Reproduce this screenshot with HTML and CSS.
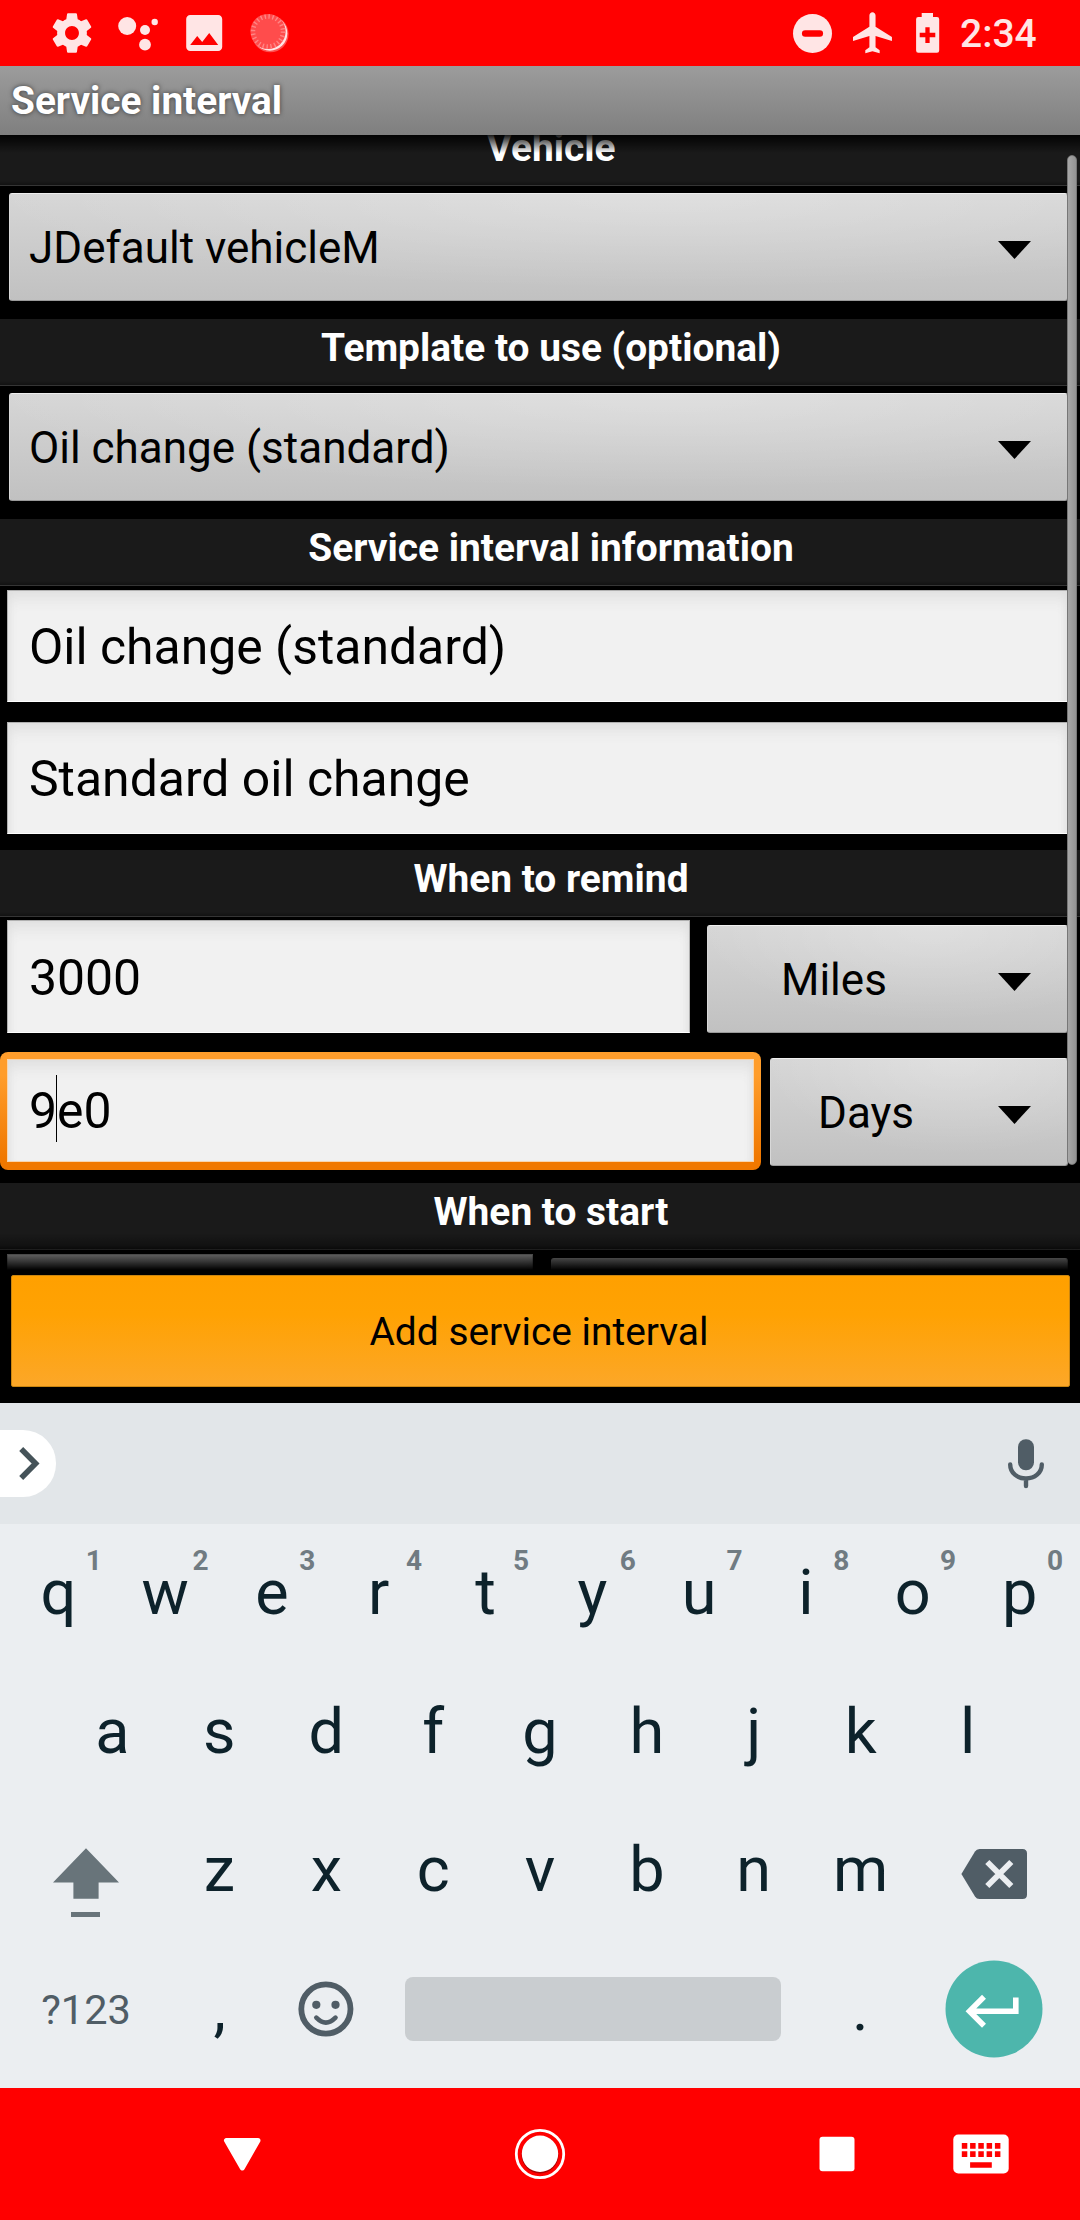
FILE: index.html
```html
<!DOCTYPE html>
<html lang="en">
<head>
<meta charset="utf-8">
<title>Service interval</title>
<link rel="stylesheet" href="styles.css">
</head>
<body>
<div class="screen">
  <header class="status">
    <svg class="status-left" width="300" height="66" viewBox="0 0 300 66" fill="#ffe5e5">
      <path transform="translate(48.2 9.2) scale(1.983)" d="M19.43 12.98c.04-.32.07-.64.07-.98s-.03-.66-.07-.98l2.11-1.65c.19-.15.24-.42.12-.64l-2-3.46c-.12-.22-.39-.3-.61-.22l-2.49 1c-.52-.4-1.08-.73-1.69-.98l-.38-2.65C14.46 2.18 14.25 2 14 2h-4c-.25 0-.46.18-.49.42l-.38 2.65c-.61.25-1.17.59-1.69.98l-2.49-1c-.23-.09-.49 0-.61.22l-2 3.46c-.13.22-.07.49.12.64l2.11 1.65c-.04.32-.07.65-.07.98s.03.66.07.98l-2.11 1.65c-.19.15-.24.42-.12.64l2 3.46c.12.22.39.3.61.22l2.49-1c.52.4 1.08.73 1.69.98l.38 2.65c.03.24.24.42.49.42h4c.25 0 .46-.18.49-.42l.38-2.65c.61-.25 1.17-.59 1.69-.98l2.49 1c.23.09.49 0 .61-.22l2-3.46c.12-.22.07-.49-.12-.64l-2.11-1.65zM12 15.5c-1.93 0-3.5-1.57-3.5-3.5s1.57-3.5 3.5-3.5 3.5 1.57 3.5 3.5-1.57 3.5-3.5 3.5z"/>
      <circle cx="127.2" cy="26" r="9"/><circle cx="145" cy="30" r="5"/><circle cx="154.7" cy="22" r="3.2"/><circle cx="145" cy="44.7" r="5.9"/>
      <path transform="translate(180.2 9) scale(2)" d="M21 19V5c0-1.1-.9-2-2-2H5c-1.1 0-2 .9-2 2v14c0 1.1.9 2 2 2h14c1.1 0 2-.9 2-2zM8.5 13.5l2.5 3.01L14.500 12l4.500 6H5l3.500-4.500z"/>
      <circle cx="270.300" cy="34" r="18.300" opacity=".35"/>
      <circle cx="269.800" cy="33.200" r="17.500"/>
      <circle cx="268" cy="31.500" r="17.600" fill="#ff4c4c"/>
      <circle cx="268" cy="31.500" r="15" fill="none" stroke="#ff8585" stroke-width="4.500" stroke-dasharray="1.400 2.527"/>
    </svg>
    <svg class="status-right" width="145" height="66" viewBox="790 0 145 66" fill="#ffe5e5">
      <circle cx="812.500" cy="33.400" r="19.500"/>
      <path d="M805.200 33.400h14.600" stroke="#f00" stroke-width="6.500" stroke-linecap="round"/>
      <path transform="translate(848.900 8.200) scale(2.050)" d="M21 16v-2l-8-5V3.500c0-.83-.67-1.500-1.500-1.500S10 2.670 10 3.500V9l-8 5v2l8-2.500V19l-2 1.500V22l3.500-1 3.500 1v-1.500L13 19v-5.500l8 2.500z"/>
    </svg>
    <svg width="26" height="66" viewBox="915 0 26 66" fill="#ffe5e5">
      <path d="M921.700 13h11.300v4h4a2.200 2.200 0 0 1 2.200 2.200v31.300a2.200 2.200 0 0 1-2.200 2.200h-18.700a2.200 2.200 0 0 1-2.200-2.200V19.200a2.200 2.200 0 0 1 2.200-2.200h3.400z"/>
      <path d="M919.700 35h15.600M927.500 27.300v15.600" stroke="#f00" stroke-width="4.300"/>
    </svg>
    <span class="clock">2:34</span>
  </header>

  <div class="titlebar">Service interval</div>

  <main class="form">
    <h2 class="section section-first">Vehicle</h2>
    <div class="row row-spinner"><div class="spinner"><span>JDefault vehicleM</span><i class="arrow"></i></div></div>
    <h2 class="section">Template to use (optional)</h2>
    <div class="row row-spinner"><div class="spinner"><span>Oil change (standard)</span><i class="arrow"></i></div></div>
    <h2 class="section">Service interval information</h2>
    <div class="row row-edit"><div class="edit">Oil change (standard)</div></div>
    <div class="row row-edit"><div class="edit">Standard oil change</div></div>
    <h2 class="section">When to remind</h2>
    <div class="row row-pair">
      <div class="edit edit-distance">3000</div>
      <div class="spinner spinner-miles"><span>Miles</span><i class="arrow"></i></div>
    </div>
    <div class="row row-focus">
      <div class="focus"><div class="edit edit-active">9<span class="caret"></span>e0</div></div>
      <div class="spinner spinner-days"><span>Days</span><i class="arrow"></i></div>
    </div>
    <h2 class="section">When to start</h2>
    <div class="row row-start"><div class="edit edit-start"></div><div class="spinner spinner-start"></div></div>
    <div class="fade-top"></div>
    <div class="fade-bottom"></div>
    <div class="scrollbar"></div>
  </main>

  <div class="actions"><button class="submit">Add service interval</button></div>

  <section class="keyboard">
    <div class="strip">
      <div class="expand"><svg width="56" height="67" viewBox="0 0 56 67"><path d="M21.200 19 35.600 33.500 21.200 48" fill="none" stroke="#455359" stroke-width="5.600"/></svg></div>
      <svg class="mic" width="36" height="52" viewBox="1008 1437 36 52"><rect x="1018" y="1438.300" width="16" height="31" rx="7.800" fill="#505d66"/><path d="M1010.200 1463.500c0 8.500 7.200 14 15.800 14s15.800-5.500 15.800-14M1026 1478v7" fill="none" stroke="#505d66" stroke-width="4.400" stroke-linecap="round"/></svg>
    </div>
    <div class="keys">
      <div class="keyrow keyrow-1">
        <div class="key">q<sup>1</sup></div><div class="key">w<sup>2</sup></div><div class="key">e<sup>3</sup></div><div class="key">r<sup>4</sup></div><div class="key">t<sup>5</sup></div><div class="key">y<sup>6</sup></div><div class="key">u<sup>7</sup></div><div class="key">i<sup>8</sup></div><div class="key">o<sup>9</sup></div><div class="key">p<sup>0</sup></div>
      </div>
      <div class="keyrow keyrow-2">
        <div class="key">a</div><div class="key">s</div><div class="key">d</div><div class="key">f</div><div class="key">g</div><div class="key">h</div><div class="key">j</div><div class="key">k</div><div class="key">l</div>
      </div>
      <div class="keyrow keyrow-3">
        <div class="key-wide"><svg width="68" height="138" viewBox="52 1801 68 138" fill="#68747a"><path d="M86 1848.300 119 1882.400H98.600v16.400H73.400v-16.400H53zM71 1912h29v5H71z"/></svg></div>
        <div class="key">z</div><div class="key">x</div><div class="key">c</div><div class="key">v</div><div class="key">b</div><div class="key">n</div><div class="key">m</div>
        <div class="key-wide"><svg width="68" height="138" viewBox="959 1801 68 138"><path d="M960.400 1874 974 1851.500q1.600-2.500 4.500-2.500h43q4.500 0 4.500 4.500v41q0 4.500-4.500 4.500h-43q-2.900 0-4.500-2.500z" fill="#505d66"/><path d="m986.300 1862 24 24m0-24-24 24" stroke="#ebeef1" stroke-width="5.800"/></svg></div>
      </div>
      <div class="keyrow keyrow-4">
        <div class="key-wide key-symbols">?123</div>
        <div class="key key-mark">,</div>
        <div class="key"><svg width="60" height="138" viewBox="295.500 1939.500 60 138" fill="none" stroke="#505d66"><circle cx="324.400" cy="2008.500" r="24.600" stroke-width="5.800"/><g fill="#505d66" stroke="none"><circle cx="314.800" cy="2004.300" r="4.100"/><circle cx="334" cy="2004.300" r="4.100"/></g><path d="M314.800 2017.200q9.600 9.800 19.200 0" stroke-width="4.600" stroke-linecap="round"/></svg></div>
        <div class="space"></div>
        <div class="key key-mark">.</div>
        <div class="key-wide"><svg width="100" height="138" viewBox="943.500 1939.500 100 138"><circle cx="993.500" cy="2008.500" r="48.500" fill="#4db6ac"/><path d="M983.500 1996.200 969 2010.700l14.500 14.500M969.500 2010.700h45.800V1997" fill="none" stroke="#fff" stroke-width="5.600"/></svg></div>
      </div>
    </div>
  </section>

  <nav class="navbar">
    <svg width="1080" height="132" viewBox="0 2088 1080 132" fill="#fff">
      <path d="M226.500 2140.500h31.500L242.300 2168z" stroke="#fff" stroke-width="5" stroke-linejoin="round"/>
      <circle cx="540" cy="2154" r="23.700" fill="none" stroke="#fff" stroke-width="2.800"/>
      <circle cx="540" cy="2155" r="18.500" fill="#a00"/>
      <circle cx="540" cy="2153.800" r="18.200"/>
      <rect x="819.500" y="2136.700" width="35" height="34.500" rx="3"/>
      <rect x="953.300" y="2134.500" width="55.400" height="39" rx="5"/>
      <path fill="#f00" d="M961.800 2143h5.500v5.700h-5.500zm8.300 0h5.500v5.700h-5.500zm8.200 0h5.500v5.700h-5.500zm8.300 0h5.500v5.700h-5.500zm8.300 0h5.500v5.700h-5.500zM961.800 2151.300h5.500v5.700h-5.500zm8.300 0h5.500v5.700h-5.500zm8.200 0h5.500v5.700h-5.500zm8.300 0h5.500v5.700h-5.500zm8.300 0h5.500v5.700h-5.500zM970.100 2162.300h21.700v5.500h-21.700z"/>
    </svg>
  </nav>
</div>
</body>
</html>
```
FILE: styles.css
```css
* { box-sizing: border-box; }

body {
  margin: 0;
  background: #000;
  font-family: Roboto, "Liberation Sans", sans-serif;
}

svg { display: block; flex: none; }

.screen {
  display: flex;
  flex-direction: column;
  width: 1080px;
  height: 2220px;
  overflow: hidden;
}

/* Status bar */
.status {
  display: flex;
  flex: none;
  height: 66px;
  background: #f00;
}
.status-right { margin-left: auto; margin-right: -20px; }
.clock {
  width: 139px;
  padding-left: 19px;
  font-size: 39px;
  font-weight: 500;
  line-height: 69px;
  color: #ffe5e5;
}

.titlebar {
  flex: none;
  height: 69px;
  padding-left: 11px;
  background: linear-gradient(#9c9c9c, #7f7f7f);
  color: #fff;
  font-size: 38.8px;
  font-weight: 700;
  line-height: 70px;
  text-shadow: 0 0 5px rgba(0, 0, 0, .6);
}

/* Scrolling form */
.form {
  position: relative;
  display: flex;
  flex-direction: column;
  flex: none;
  height: 1137px;
  overflow: hidden;
}
.section {
  flex: none;
  height: 67px;
  margin: 0;
  padding-left: 22px;
  border-bottom: 1px solid #353535;
  background: linear-gradient(#1a1a1a 62px, #121212);
  color: #fff;
  font-size: 38.9px;
  font-weight: 700;
  line-height: 58px;
  text-align: center;
}
.section-first { margin-top: -16px; }
.row {
  display: flex;
  flex: none;
  padding-right: 12px;
}
.row-spinner { height: 133px; padding-top: 7px; padding-left: 9px; }
.row-edit { height: 132px; padding-top: 4px; padding-left: 7px; }
.row-pair { height: 135px; padding-top: 3px; padding-left: 7px; }
.row-focus { height: 131px; }
.row-start { height: 30px; padding-top: 4px; padding-left: 7px; }

.spinner {
  display: flex;
  flex: 1;
  justify-content: space-between;
  height: 108px;
  padding-left: 19px;
  border: 1px solid #9a9a9a;
  border-top-color: #efefef;
  border-left-color: #d8d8d8;
  border-radius: 3px;
  background:
    radial-gradient(ellipse 65% 90% at 62% 0, rgba(255, 255, 255, .24), rgba(255, 255, 255, 0)),
    linear-gradient(#d6d6d6, #c1c1c1);
  color: #000;
  font-size: 44px;
  line-height: 108px;
}
.spinner-miles { margin: 5px 0 0 17px; padding-left: 73px; }
.spinner-days { margin: 6px 0 0 9px; padding-left: 47px; }
.spinner-start { margin: 4px 0 0 18px; border-top-color: #ddd; }
.arrow {
  width: 33px;
  height: 18px;
  margin: 47px 36px 0 0;
  background: #000;
  clip-path: polygon(0 0, 100% 0, 50% 100%);
}

.edit {
  flex: 1;
  height: 112px;
  padding-left: 21px;
  border: 1px solid #b0b0b0;
  border-bottom-color: #fff;
  background: #f1f1f1;
  box-shadow: inset 0 14px 16px -8px #ddd, inset 8px 0 10px -8px #ddd, inset -8px 0 10px -8px #ddd;
  color: #000;
  font-size: 49.9px;
  line-height: 112px;
}
.edit-distance { flex: 0 0 683px; height: 113px; line-height: 114px; }
.edit-start { flex: 0 0 526px; }
.focus {
  flex: 0 0 761px;
  height: 118px;
  padding: 7px 7px 8px;
  border-radius: 8px;
  background: linear-gradient(#ff9d2b 20%, #f07800 90%);
}
.edit-active { height: 103px; padding-left: 21px; line-height: 102px; border-color: #f8d5ae; }
.caret {
  display: inline-block;
  width: 1px;
  height: 67px;
  margin-left: -1px;
  background: #000;
  vertical-align: -14px;
}

.fade-top, .fade-bottom { position: absolute; left: 0; right: 0; }
.fade-top { top: 0; height: 18px; background: linear-gradient(rgba(0, 0, 0, .9), transparent); }
.fade-bottom { bottom: 0; height: 39px; background: linear-gradient(transparent, #000 95%); }
.scrollbar {
  position: absolute;
  top: 20px;
  left: 1067px;
  width: 10px;
  height: 1010px;
  border: 1px solid #777;
  border-radius: 5px;
  background: linear-gradient(90deg, #a8a8a8, #939393);
}

.actions { flex: none; height: 131px; padding: 3px 10px 0 11px; background: #000; }
.submit {
  display: block;
  width: 100%;
  height: 112px;
  padding: 0 3px 0 0;
  border: 1px solid #c98510;
  border-radius: 2px;
  background: linear-gradient(#ffa000, #ffa203 35%, #fca728);
  color: #000;
  font-family: inherit;
  font-size: 38.9px;
  line-height: 112px;
  text-align: center;
}

/* Keyboard */
.keyboard { flex: none; height: 685px; background: #ebeef1; }
.strip {
  display: flex;
  align-items: center;
  justify-content: space-between;
  height: 121px;
  padding-right: 36px;
  background: #e2e6e9;
}
.expand { width: 56px; height: 67px; border-radius: 0 33px 33px 0; background: #fff; }
.keyrow { display: flex; height: 138.5px; padding: 0 6px; }
.keyrow-1 { padding: 0 7px 0 5px; }
.keyrow-2 { padding: 0 59px; }
.key, .key-wide { display: flex; flex: 1; justify-content: center; }
.key {
  position: relative;
  color: #0d222b;
  font-size: 63px;
  line-height: 138.5px;
}
.key-wide { flex: 0 0 160px; }
.key sup {
  position: absolute;
  top: 22px;
  right: 10px;
  color: #707b82;
  font-size: 28px;
  font-weight: 700;
  line-height: 30px;
}
.key-symbols { color: #505d66; font-size: 41.5px; line-height: 140px; }
.space {
  flex: 0 0 376px;
  height: 64px;
  margin: 37px 26px 0 24px;
  border-radius: 8px;
  background: #c9cdd0;
}

.navbar { flex: none; height: 132px; background: #f00; }
```
